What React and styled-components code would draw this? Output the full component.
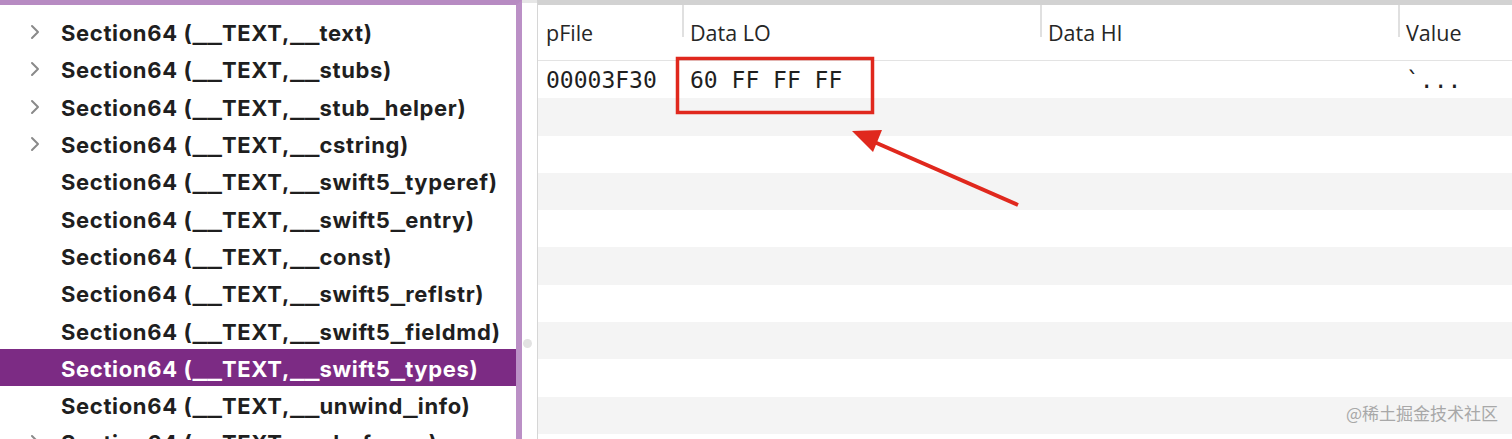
import React from 'react'
import styled, { createGlobalStyle } from 'styled-components'

const GlobalStyle = createGlobalStyle`
  html, body {
    margin: 0;
    padding: 0;
    background: #ffffff;
    overflow: hidden;
  }
`

const sections = [
  { name: '__text', expandable: true },
  { name: '__stubs', expandable: true },
  { name: '__stub_helper', expandable: true },
  { name: '__cstring', expandable: true },
  { name: '__swift5_typeref' },
  { name: '__swift5_entry' },
  { name: '__const' },
  { name: '__swift5_reflstr' },
  { name: '__swift5_fieldmd' },
  { name: '__swift5_types', selected: true },
  { name: '__unwind_info' },
  { name: '__eh_frame', expandable: true },
]

const ROW_H = 37.3

// the macOS system font draws "_" much wider than Inter does
function withWideUnderscores(text) {
  return text.split(/(_+)/).map((part, i) =>
    part.startsWith('_') ? <Under key={i}>{part}</Under> : part
  )
}

export default function App() {
  return (
    <>
      <GlobalStyle />
      <Window>
        <Sidebar>
          <Tree>
            {sections.map((s) => (
              <TreeRow key={s.name} $selected={s.selected}>
                <Disclosure>
                  {s.expandable && (
                    <svg width="10" height="16" viewBox="0 0 10 16">
                      <path
                        d="M2 2 L8 8 L2 14"
                        fill="none"
                        stroke="#8a8a8a"
                        strokeWidth="2"
                        strokeLinecap="round"
                        strokeLinejoin="round"
                      />
                    </svg>
                  )}
                </Disclosure>
                <TreeLabel>
                  {withWideUnderscores(`Section64 (__TEXT,${s.name})`)}
                </TreeLabel>
              </TreeRow>
            ))}
          </Tree>
        </Sidebar>
        <Splitter>
          <Grip />
        </Splitter>
        <Content>
          <Header>
            <HeadCell $w={144}>pFile</HeadCell>
            <HeadCell $w={358} $sep>Data LO</HeadCell>
            <HeadCell $w={358} $sep>Data HI</HeadCell>
            <HeadCell $sep>Value</HeadCell>
          </Header>
          <Rows>
            <DataRow>
              <Cell $w={144}>00003F30</Cell>
              <Cell $w={358}>60 FF FF FF</Cell>
              <Cell $w={358}></Cell>
              <Cell>`...</Cell>
            </DataRow>
            {Array.from({ length: 9 }).map((_, i) => (
              <DataRow key={i} $alt={i % 2 === 0} />
            ))}
          </Rows>
          <Watermark>@稀土掘金技术社区</Watermark>
        </Content>
        <Annotation width="1512" height="439" viewBox="0 0 1512 439">
          <rect x="677.5" y="58.5" width="195" height="54" fill="none" stroke="#e0281d" strokeWidth="3.5" />
          <line x1="1018" y1="205" x2="872" y2="141" stroke="#e0281d" strokeWidth="4" />
          <polygon points="852,131 882,130 873,152" fill="#e0281d" />
        </Annotation>
      </Window>
    </>
  )
}

const Window = styled.div`
  position: relative;
  display: flex;
  width: 1512px;
  height: 439px;
  overflow: hidden;
  background: #ffffff;
`

const Sidebar = styled.div`
  width: 516px;
  flex: none;
  border-top: 5px solid #b78bc2;
  border-right: 6px solid #bb90c6;
  background: #ffffff;
  overflow: hidden;
`

const Tree = styled.div`
  display: flex;
  flex-direction: column;
  padding-top: 8.5px;
`

const TreeRow = styled.div`
  display: flex;
  align-items: center;
  height: ${ROW_H}px;
  flex: none;
  background: ${(p) => (p.$selected ? '#7c2b84' : 'transparent')};
  color: ${(p) => (p.$selected ? '#ffffff' : '#1f1f1f')};
`

const Disclosure = styled.div`
  width: 61px;
  flex: none;
  display: flex;
  align-items: center;
  padding-left: 30px;
  box-sizing: border-box;
`

const TreeLabel = styled.span`
  font-family: Inter, 'Liberation Sans', sans-serif;
  font-weight: 700;
  font-size: 22px;
  line-height: 26px;
  white-space: nowrap;
  letter-spacing: 0.65px;
`

const Under = styled.span`
  font-family: 'DejaVu Sans Mono', monospace;
  font-size: 24.5px;
  letter-spacing: 0;
  vertical-align: 2px;
`

const Splitter = styled.div`
  width: 15px;
  flex: none;
  position: relative;
  background: #ffffff;
  border-top: 3px solid #e6e6e6;
`

const Grip = styled.div`
  position: absolute;
  left: 1px;
  top: 336px;
  width: 9px;
  height: 9px;
  border-radius: 50%;
  background: #e2e2e2;
`

const Content = styled.div`
  position: relative;
  flex: 1;
  display: flex;
  flex-direction: column;
  border-top: 5px solid #d2d2d2;
  border-left: 1px solid #d6d6d6;
  background: #ffffff;
`

const Header = styled.div`
  display: flex;
  align-items: center;
  height: 55px;
  flex: none;
  border-bottom: 1.5px solid #e3e3e3;
`

const HeadCell = styled.div`
  position: relative;
  width: ${(p) => (p.$w ? `${p.$w}px` : 'auto')};
  flex: ${(p) => (p.$w ? 'none' : '1')};
  box-sizing: border-box;
  padding-left: 8px;
  font-family: 'Open Sans', 'Liberation Sans', sans-serif;
  font-size: 21.5px;
  color: #262626;
  ${(p) =>
    p.$sep &&
    `
    &::before {
      content: '';
      position: absolute;
      left: 0;
      top: -13px;
      height: 32px;
      width: 1.5px;
      background: #e0e0e0;
    }
  `}
`

const Rows = styled.div`
  display: flex;
  flex-direction: column;
`

const DataRow = styled.div`
  display: flex;
  align-items: center;
  height: ${ROW_H}px;
  flex: none;
  background: ${(p) => (p.$alt ? '#f4f4f4' : '#ffffff')};
`

const Cell = styled.div`
  width: ${(p) => (p.$w ? `${p.$w}px` : 'auto')};
  flex: ${(p) => (p.$w ? 'none' : '1')};
  box-sizing: border-box;
  padding-left: 8px;
  font-family: 'DejaVu Sans Mono', 'Liberation Mono', monospace;
  font-size: 23px;
  color: #1f1f1f;
  white-space: pre;
`

const Watermark = styled.div`
  position: absolute;
  right: 14px;
  bottom: 14px;
  font-family: 'Noto Sans CJK SC', sans-serif;
  font-size: 17px;
  color: #a8a8a8;
`

const Annotation = styled.svg`
  position: absolute;
  left: 0;
  top: 0;
  pointer-events: none;
`
